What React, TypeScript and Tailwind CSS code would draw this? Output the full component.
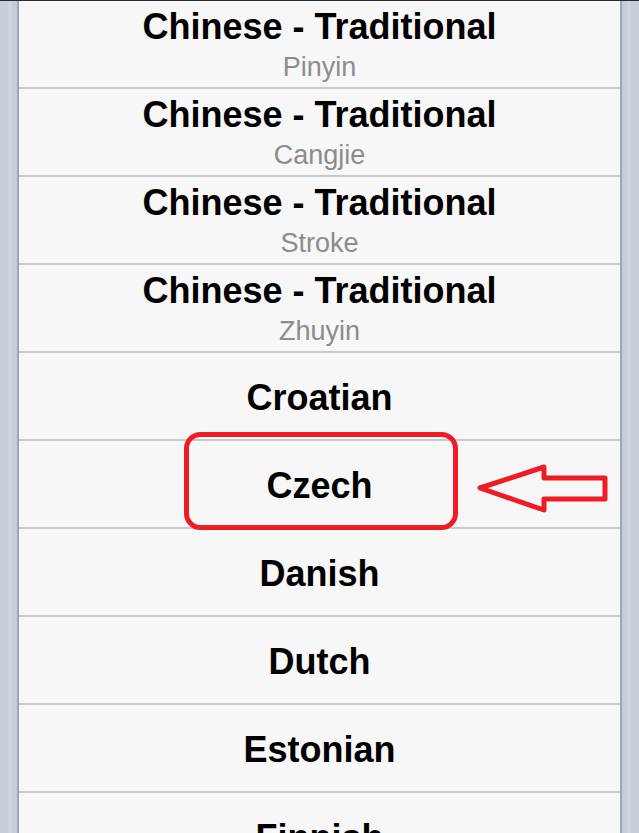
import React from "react";

const languages: { name: string; sub?: string }[] = [
	{ name: "Chinese - Traditional", sub: "Pinyin" },
	{ name: "Chinese - Traditional", sub: "Cangjie" },
	{ name: "Chinese - Traditional", sub: "Stroke" },
	{ name: "Chinese - Traditional", sub: "Zhuyin" },
	{ name: "Croatian" },
	{ name: "Czech" },
	{ name: "Danish" },
	{ name: "Dutch" },
	{ name: "Estonian" },
	{ name: "Finnish" },
];

const Rail = ({ side }: { side: "left" | "right" }) => (
	<div className={`flex shrink-0 ${side === "left" ? "" : "flex-row-reverse"}`}>
		<div className="w-[8px] bg-[#c6cdd6]" />
		<div className="w-[4px] bg-[#ced4dc]" />
		<div className="w-[5px] bg-[#c6cdd6]" />
		<div className="w-[2px] bg-[#a2a7ad]" />
	</div>
);

const App = () => {
	return (
		<div
			className="relative h-[833px] w-[639px] overflow-hidden bg-[#f7f7f7]"
			style={{ fontFamily: '"Liberation Sans", Arial, sans-serif' }}
		>
			<div className="h-px bg-[#2b2b2b]" />
			<div className="flex h-[832px]">
				<Rail side="left" />
				<ul className="flex-1">
					{languages.map((lang, index) => (
						<li
							key={index}
							className={`flex h-[88px] flex-col items-center justify-center border-b-2 border-[#c8c8c8] bg-[#f7f7f7] ${
								lang.sub ? "" : "pt-[3px]"
							}`}
						>
							<span className="text-[36px] leading-[40px] font-bold text-black">
								{lang.name}
							</span>
							{lang.sub && (
								<span className="mt-[5px] text-[27px] leading-[30px] text-[#8c8c8c]">
									{lang.sub}
								</span>
							)}
						</li>
					))}
				</ul>
				<Rail side="right" />
			</div>

			{/* annotation: highlight box + arrow */}
			<svg
				className="pointer-events-none absolute top-0 left-0"
				width="639"
				height="833"
			>
				<rect
					x="186.5"
					y="434.5"
					width="269"
					height="93"
					rx="14"
					fill="none"
					stroke="#ee1c25"
					strokeWidth="5"
				/>
				<polygon
					points="480,488 544,467 544,478 605,478 605,499 544,499 544,510"
					fill="none"
					stroke="#ee1c25"
					strokeWidth="5"
					strokeLinejoin="round"
				/>
			</svg>
		</div>
	);
};

export default App;
